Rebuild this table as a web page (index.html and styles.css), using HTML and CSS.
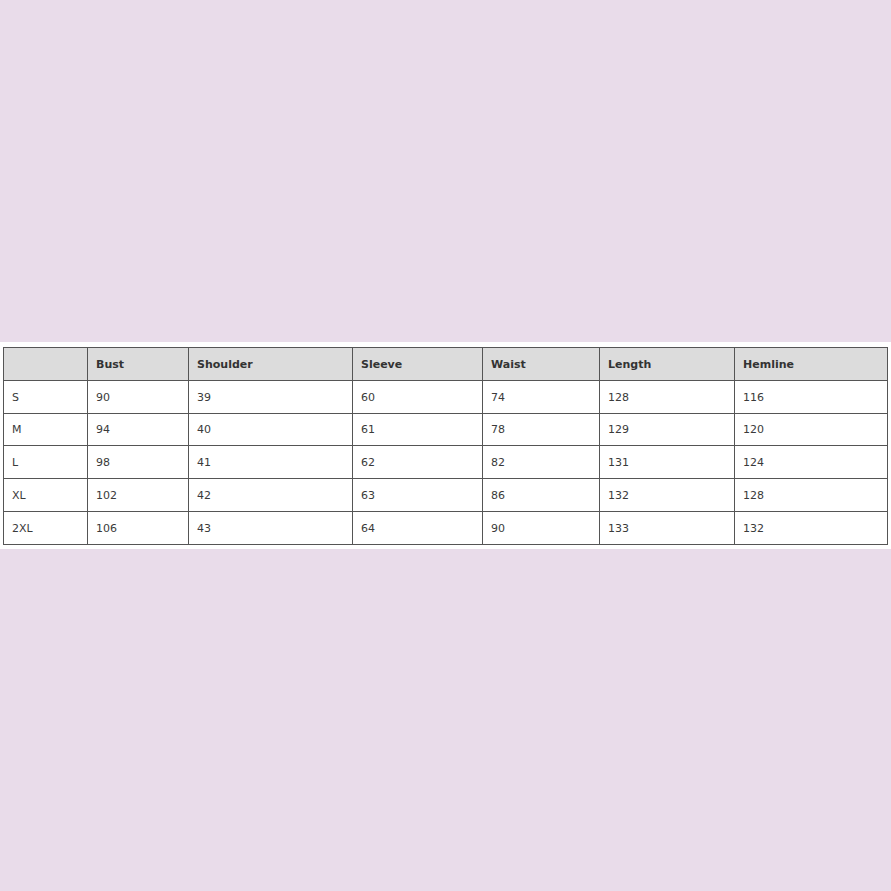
FILE: index.html
```html
<!DOCTYPE html>
<html>
<head>
<meta charset="utf-8">
<link rel="stylesheet" href="styles.css">
</head>
<body>
<div class="page">
  <div class="band">
    <table class="sizes">
      <colgroup>
        <col class="c1"><col class="c2"><col class="c3"><col class="c4"><col class="c5"><col class="c6"><col class="c7">
      </colgroup>
      <thead>
        <tr><th></th><th>Bust</th><th>Shoulder</th><th>Sleeve</th><th>Waist</th><th>Length</th><th>Hemline</th></tr>
      </thead>
      <tbody>
        <tr><td>S</td><td>90</td><td>39</td><td>60</td><td>74</td><td>128</td><td>116</td></tr>
        <tr class="short"><td>M</td><td>94</td><td>40</td><td>61</td><td>78</td><td>129</td><td>120</td></tr>
        <tr><td>L</td><td>98</td><td>41</td><td>62</td><td>82</td><td>131</td><td>124</td></tr>
        <tr><td>XL</td><td>102</td><td>42</td><td>63</td><td>86</td><td>132</td><td>128</td></tr>
        <tr><td>2XL</td><td>106</td><td>43</td><td>64</td><td>90</td><td>133</td><td>132</td></tr>
      </tbody>
    </table>
  </div>
</div>
</body>
</html>
```

FILE: styles.css
```css
html, body {
  margin: 0;
  padding: 0;
}
body {
  background: #e9dcea;
  font-family: "DejaVu Sans", Verdana, sans-serif;
  width: 891px;
  height: 891px;
  overflow: hidden;
}
.page {
  padding-top: 342px;
}
.band {
  background: #ffffff;
  padding: 5px 3px 4px 3px;
}
.sizes {
  border-collapse: collapse;
  table-layout: fixed;
  width: 884px;
  font-size: 11px;
  color: #3a3a3a;
}
.c1 { width: 84px; }
.c2 { width: 101px; }
.c3 { width: 164px; }
.c4 { width: 130px; }
.c5 { width: 117px; }
.c6 { width: 135px; }
.c7 { width: 153px; }
.sizes th, .sizes td {
  border: 1px solid #555555;
  text-align: left;
  padding: 0 0 0 8px;
  box-sizing: border-box;
  vertical-align: middle;
}
.sizes th {
  background: #dcdcdc;
  font-weight: bold;
  color: #333333;
  height: 33px;
}
.sizes td {
  height: 33px;
}
.sizes tr.short td {
  height: 32px;
}
```
